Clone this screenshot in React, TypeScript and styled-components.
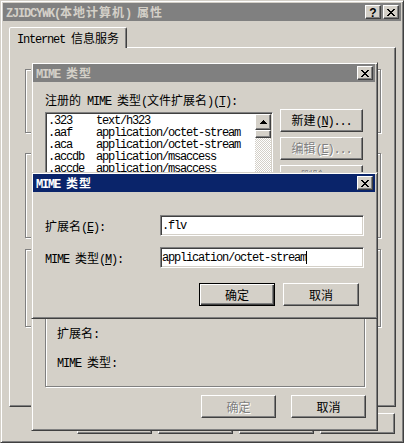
import React, { Fragment } from "react";
import styled, { createGlobalStyle, css } from "styled-components";

const face = "#d4d0c8";
const light = "#ffffff";
const shadow = "#808080";
const dark = "#404040";
const navy = "#0a246a";

const GlobalStyle = createGlobalStyle`
  html, body {
    margin: 0;
    padding: 0;
    background: ${face};
  }
  body {
    font-family: "Noto Sans CJK SC", sans-serif;
    font-size: 12px;
    line-height: 14px;
    color: #000;
  }
  * {
    box-sizing: border-box;
  }
`;

const raised = css`
  border: 1px solid;
  border-color: ${light} ${dark} ${dark} ${light};
  box-shadow: inset -1px -1px ${shadow};
  background: ${face};
`;

const sunken = css`
  border: 1px solid;
  border-color: ${shadow} ${light} ${light} ${shadow};
  box-shadow: inset 1px 1px ${dark}, inset -1px -1px ${face};
  padding: 1px;
`;

const frame = css`
  background: ${face};
  border: 1px solid;
  border-color: ${face} ${dark} ${dark} ${face};
  box-shadow: inset 1px 1px ${light}, inset -1px -1px ${shadow};
`;

// SimSun draws latin at half width, so ascii runs get a narrow mono face
const Latin = styled.span`
  font-family: "Liberation Mono", monospace;
  font-size: 12px;
  letter-spacing: -1.2px;
`;

function Text({ s }: { s: string }) {
  const runs = s.match(/[\x20-\x7e]+|[^\x20-\x7e]+/g) ?? [];
  return (
    <>
      {runs.map((run, i) => {
        if (!/^[\x20-\x7e]/.test(run)) return <Fragment key={i}>{run}</Fragment>;
        const at = run.indexOf("&");
        if (at < 0) return <Latin key={i}>{run}</Latin>;
        return (
          <Latin key={i}>
            {run.slice(0, at)}
            <u>{run[at + 1]}</u>
            {run.slice(at + 2)}
          </Latin>
        );
      })}
    </>
  );
}

const Window = styled.div`
  position: relative;
  width: 404px;
  height: 443px;
  padding: 2px;
  display: flex;
  flex-direction: column;
  ${frame}
`;

const Dialog = styled.div<{ $x: number; $y: number; $h: number }>`
  position: absolute;
  left: ${p => p.$x}px;
  top: ${p => p.$y}px;
  width: 347px;
  height: ${p => p.$h}px;
  padding: 1px 2px 2px 1px;
  display: flex;
  flex-direction: column;
  ${frame}
`;

const TitleBar = styled.div<{ $active?: boolean }>`
  flex: none;
  height: 18px;
  display: flex;
  align-items: center;
  padding: 0 2px 0 3px;
  background: ${p => (p.$active ? navy : shadow)};
  color: ${p => (p.$active ? light : face)};
  font-weight: bold;
`;

const Caption = styled.div`
  flex: 1;
  height: 14px;
  white-space: nowrap;
  letter-spacing: 1px;
`;

const CapButton = styled.div`
  flex: none;
  width: 16px;
  height: 14px;
  display: flex;
  align-items: center;
  justify-content: center;
  color: #000;
  ${raised}
  & + & {
    margin-left: 2px;
  }
`;

const HelpGlyph = styled.span`
  font-family: "Liberation Sans", sans-serif;
  font-size: 12px;
  font-weight: bold;
  line-height: 12px;
  margin-top: 1px;
`;

const CloseGlyph = () => (
  <svg width="8" height="7" viewBox="0 0 8 7" shapeRendering="crispEdges">
    <path
      d="M0 0h2v1H0zM6 0h2v1H6zM1 1h2v1H1zM5 1h2v1H5zM2 2h4v1H2zM3 3h2v1H3zM2 4h4v1H2zM1 5h2v1H1zM5 5h2v1H5zM0 6h2v1H0zM6 6h2v1H6z"
      fill="#000"
    />
  </svg>
);

const UpArrow = () => (
  <svg width="7" height="4" viewBox="0 0 7 4" shapeRendering="crispEdges">
    <path d="M3 0h1v1h1v1h1v1h1v1H0V3h1V2h1V1h1z" fill="#000" />
  </svg>
);

const TabStrip = styled.div`
  display: flex;
  margin: 6px 0 0 6px;
`;

const Tab = styled.div`
  position: relative;
  z-index: 1;
  height: 21px;
  margin-bottom: -1px;
  padding: 2px 7px 0;
  line-height: 16px;
  white-space: nowrap;
  background: ${face};
  border: 1px solid;
  border-bottom: none;
  border-color: ${light} ${dark} transparent ${light};
  border-radius: 2px 2px 0 0;
  box-shadow: inset -1px 0 ${shadow};
`;

const TabPanel = styled.div`
  width: 387px;
  height: 360px;
  margin-left: 6px;
  padding: 21px 0 0 15px;
  display: flex;
  flex-direction: column;
  border: 1px solid;
  border-color: ${light} ${dark} ${dark} ${light};
  box-shadow: inset -1px -1px ${shadow};
`;

const Etched = styled.div<{ $h: number; $mt?: number }>`
  flex: none;
  width: 356px;
  height: ${p => p.$h}px;
  margin-top: ${p => p.$mt ?? 0}px;
  border: 1px solid ${shadow};
  box-shadow: inset 1px 1px ${light}, 1px 1px ${light};
`;

const ButtonRow = styled.div<{ $gap: number; $mt: number; $mr?: number }>`
  display: flex;
  justify-content: flex-end;
  gap: ${p => p.$gap}px;
  margin-top: ${p => p.$mt}px;
  margin-right: ${p => p.$mr ?? 0}px;
`;

const Button = styled.button<{ $w?: number; $h?: number; $default?: boolean }>`
  flex: none;
  width: ${p => p.$w ?? 75}px;
  height: ${p => p.$h ?? 23}px;
  padding: 0;
  font: inherit;
  line-height: 14px;
  color: #000;
  white-space: nowrap;
  ${raised}
  ${p =>
    p.$default &&
    css`
      border: 1px solid #000;
      box-shadow: inset 1px 1px ${light}, inset -1px -1px ${dark}, inset -2px -2px ${shadow};
    `}
  &:disabled {
    color: ${shadow};
    text-shadow: 1px 1px ${light};
  }
`;

const Body = styled.div`
  flex: 1;
  display: flex;
  flex-direction: column;
  padding: 0 9px 0 12px;
`;

const Line = styled.div`
  height: 14px;
  white-space: nowrap;
  overflow: visible;
`;

const Prompt = styled(Line)`
  margin-top: 11px;
`;

const ListRow = styled.div`
  display: flex;
  gap: 7px;
  margin-top: 2px;
`;

const ListBox = styled.div`
  width: 228px;
  height: 140px;
  margin-top: 3px;
  display: flex;
  background: ${light};
  ${sunken}
`;

const Items = styled.div`
  flex: 1;
  overflow: hidden;
  padding: 1px 0 0 1px;
`;

const Item = styled.div`
  display: grid;
  grid-template-columns: 48px 1fr;
  height: 12px;
  line-height: 12px;
  white-space: nowrap;
  overflow: hidden;
`;

const ScrollBar = styled.div`
  width: 16px;
  display: flex;
  flex-direction: column;
  background: repeating-conic-gradient(${face} 0 25%, ${light} 0 50%) 0 0 / 2px 2px;
`;

const ScrollButton = styled.div`
  height: 16px;
  display: flex;
  align-items: center;
  justify-content: center;
  ${raised}
`;

const Thumb = styled.div`
  height: 8px;
  ${raised}
`;

const SideButtons = styled.div`
  display: flex;
  flex-direction: column;
  gap: 5px;
`;

const GroupBox = styled.div`
  width: 320px;
  height: 125px;
  margin-top: 10px;
  display: flex;
  flex-direction: column;
  justify-content: flex-end;
  gap: 15px;
  padding: 0 11px 17px;
  border: 1px solid ${shadow};
  box-shadow: inset 1px 1px ${light}, 1px 1px ${light};
`;

const FormGrid = styled.div`
  display: grid;
  grid-template-columns: 115px 204px;
  grid-auto-rows: 21px;
  row-gap: 11px;
  align-items: center;
  margin-top: 23px;
`;

const Field = styled.div`
  height: 21px;
  display: flex;
  align-items: center;
  padding-left: 2px;
  background: ${light};
  white-space: nowrap;
  ${sunken}
`;

const Caret = styled.span`
  display: inline-block;
  width: 1px;
  height: 13px;
  background: #000;
`;

const mimeTypes = [
  [".323", "text/h323"],
  [".aaf", "application/octet-stream"],
  [".aca", "application/octet-stream"],
  [".accdb", "application/msaccess"],
  [".accde", "application/msaccess"],
  [".accdt", "application/msaccess"],
  [".acx", "application/internet-property-stream"],
  [".afm", "application/octet-stream"],
  [".ai", "application/postscript"],
  [".aif", "audio/x-aiff"],
];

export default function App() {
  return (
    <>
      <GlobalStyle />
      <Window>
        <TitleBar>
          <Caption>
            <Text s="ZJIDCYWK(本地计算机) 属性" />
          </Caption>
          <CapButton>
            <HelpGlyph>?</HelpGlyph>
          </CapButton>
          <CapButton>
            <CloseGlyph />
          </CapButton>
        </TitleBar>
        <TabStrip>
          <Tab>
            <Text s="Internet 信息服务" />
          </Tab>
        </TabStrip>
        <TabPanel>
          <Etched $h={64} />
          <Etched $h={85} $mt={20} />
          <Etched $h={78} $mt={11} />
        </TabPanel>
        <ButtonRow $gap={6} $mt={6} $mr={6}>
          <Button $h={21}>确定</Button>
          <Button $h={21}>取消</Button>
          <Button $h={21}>
            <Text s="应用(&A)" />
          </Button>
          <Button $h={21}>帮助</Button>
        </ButtonRow>

        <Dialog $x={30} $y={61} $h={369}>
          <TitleBar>
            <Caption>
              <Text s="MIME 类型" />
            </Caption>
            <CapButton>
              <CloseGlyph />
            </CapButton>
          </TitleBar>
          <Body>
            <Prompt>
              <Text s="注册的 MIME 类型(文件扩展名)(&T):" />
            </Prompt>
            <ListRow>
              <ListBox>
                <Items>
                  {mimeTypes.map(([ext, type]) => (
                    <Item key={ext}>
                      <Latin>{ext}</Latin>
                      <Latin>{type}</Latin>
                    </Item>
                  ))}
                </Items>
                <ScrollBar>
                  <ScrollButton>
                    <UpArrow />
                  </ScrollButton>
                  <Thumb />
                </ScrollBar>
              </ListBox>
              <SideButtons>
                <Button $w={83}>
                  <Text s="新建(&N)..." />
                </Button>
                <Button $w={83} disabled>
                  <Text s="编辑(&E)..." />
                </Button>
                <Button $w={83} disabled>
                  <Text s="删除(&R)" />
                </Button>
              </SideButtons>
            </ListRow>
            <GroupBox>
              <Line>
                <Text s="扩展名:" />
              </Line>
              <Line>
                <Text s="MIME 类型:" />
              </Line>
            </GroupBox>
            <ButtonRow $gap={15} $mt={8}>
              <Button disabled>确定</Button>
              <Button>取消</Button>
            </ButtonRow>
          </Body>
        </Dialog>

        <Dialog $x={30} $y={171} $h={147}>
          <TitleBar $active>
            <Caption>
              <Text s="MIME 类型" />
            </Caption>
            <CapButton>
              <CloseGlyph />
            </CapButton>
          </TitleBar>
          <Body>
            <FormGrid>
              <Line>
                <Text s="扩展名(&E):" />
              </Line>
              <Field>
                <Latin>.flv</Latin>
              </Field>
              <Line>
                <Text s="MIME 类型(&M):" />
              </Line>
              <Field>
                <Latin>application/octet-stream</Latin>
                <Caret />
              </Field>
            </FormGrid>
            <ButtonRow $gap={8} $mt={15} $mr={7}>
              <Button $w={76} $default>
                确定
              </Button>
              <Button $w={76}>取消</Button>
            </ButtonRow>
          </Body>
        </Dialog>
      </Window>
    </>
  );
}
